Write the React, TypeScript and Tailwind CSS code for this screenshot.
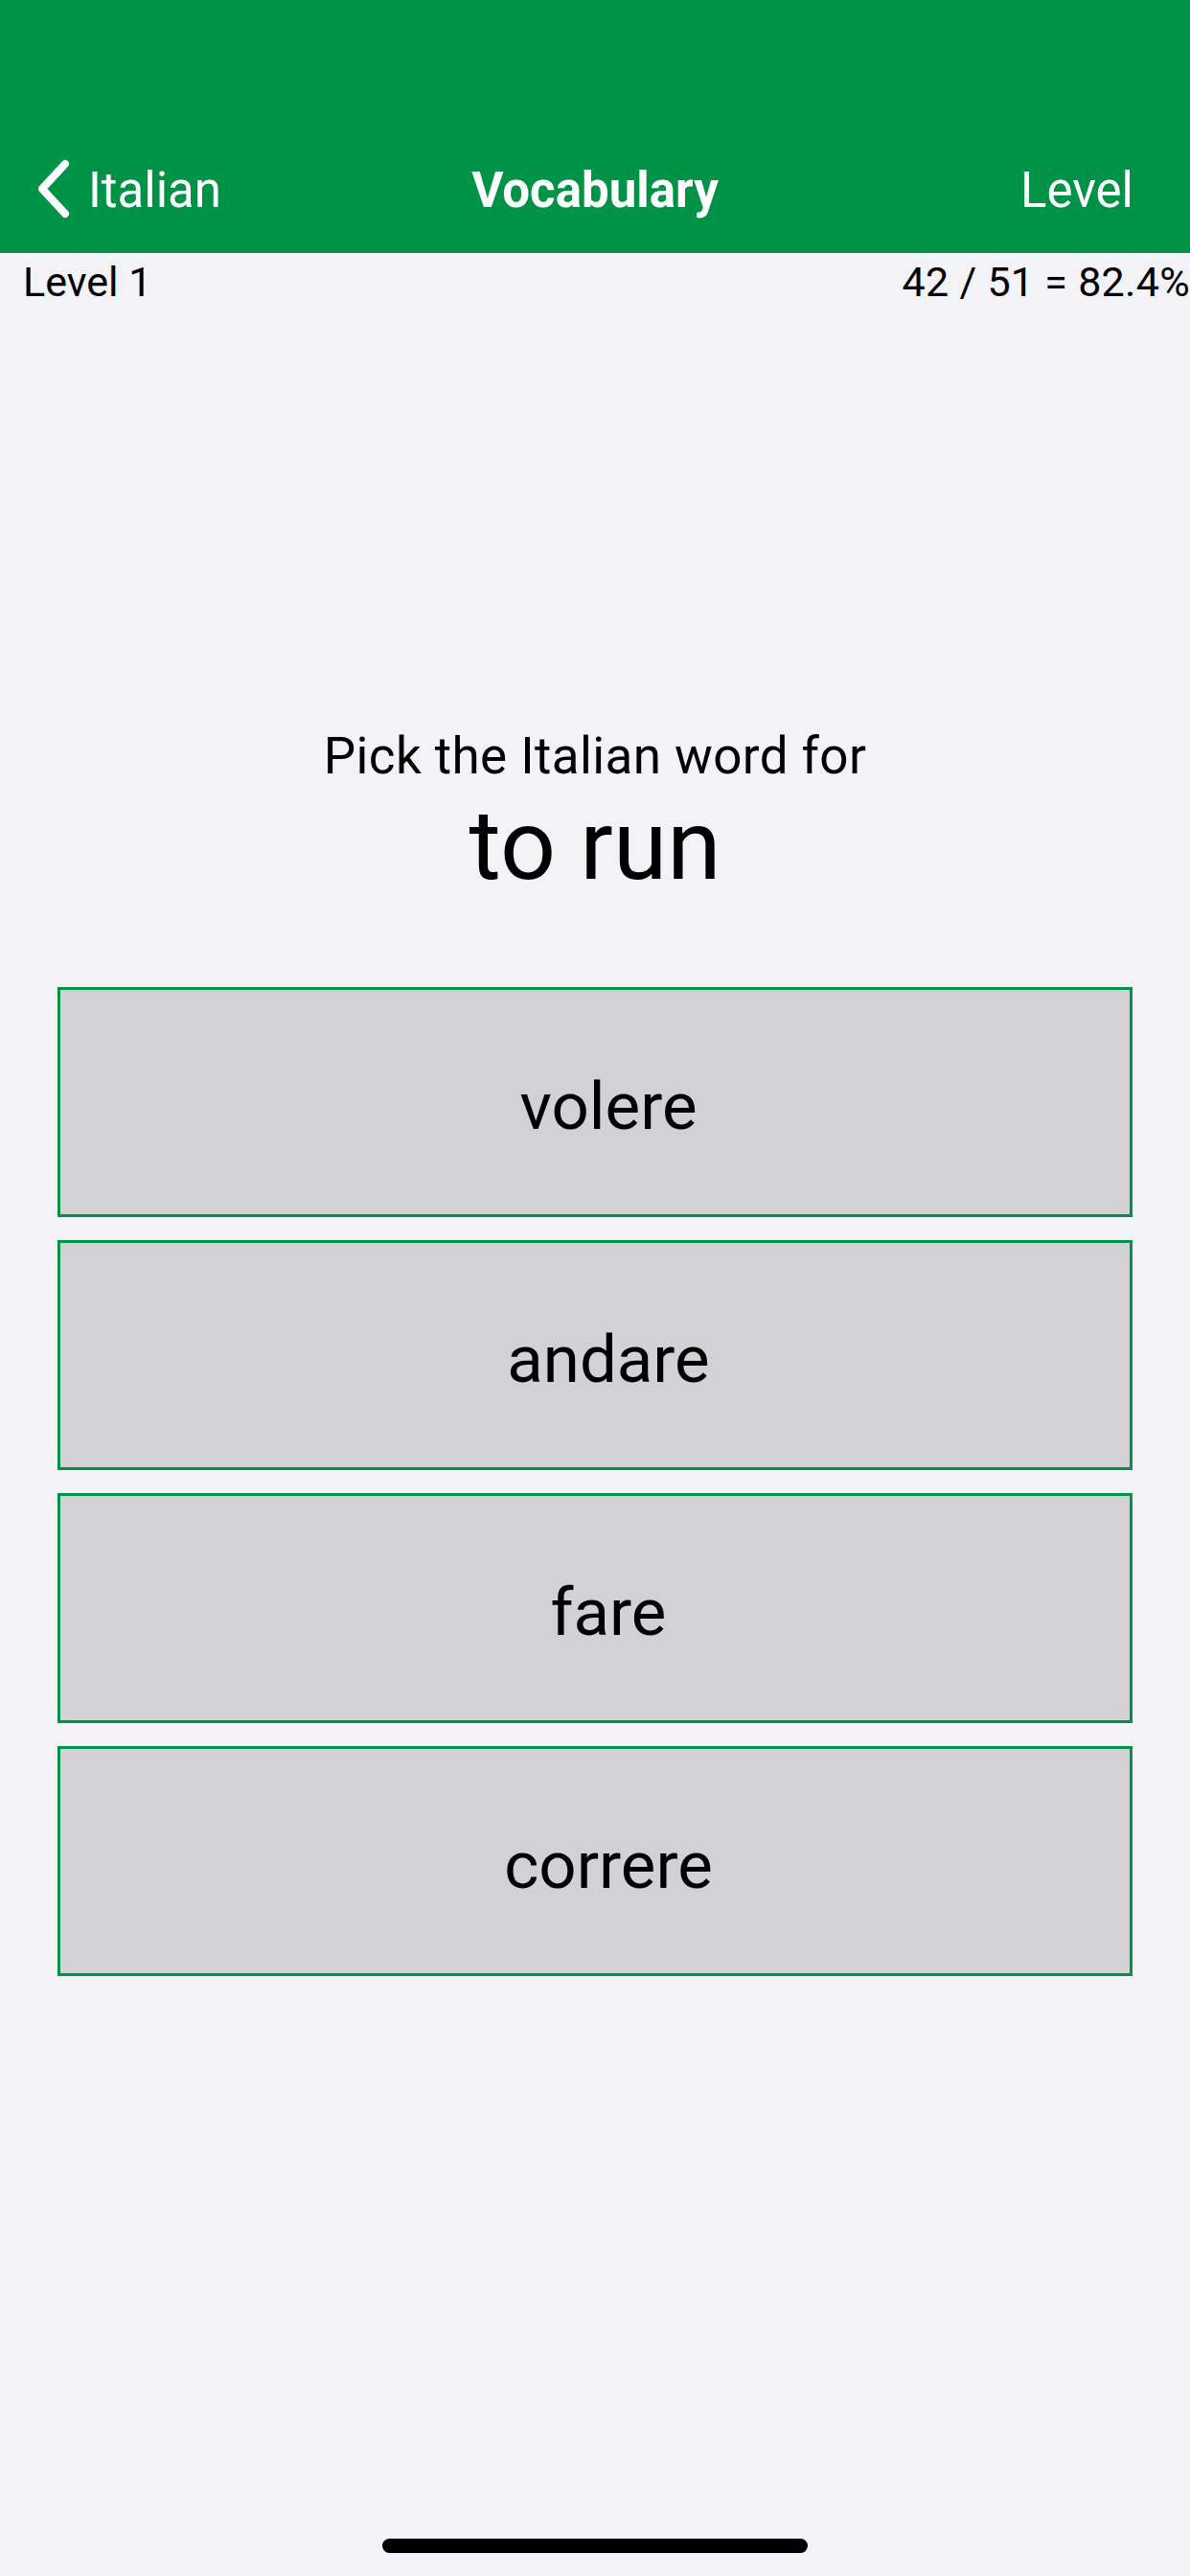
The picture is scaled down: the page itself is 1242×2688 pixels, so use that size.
const options = ['volere', 'andare', 'fare', 'correre'];

export default function App() {
  return (
    <div
      className="min-h-[2688px] w-[1242px] flex flex-col bg-[#f2f2f7] text-black"
      style={{ fontFamily: 'Roboto, "Noto Sans", sans-serif' }}
    >
      {/* nav bar */}
      <div className="bg-[#009348] pt-[132px]">
        <div className="h-[132px] grid grid-cols-3 items-center text-white text-[51px] leading-none">
          <div className="flex items-center pl-[34px]">
            <svg width="44" height="68" viewBox="0 0 44 68" fill="none" className="mr-[14px] -mt-[2px]">
              <path d="M34 8L10 34L34 60" stroke="currentColor" strokeWidth="8" strokeLinecap="round" strokeLinejoin="round" />
            </svg>
            <span>Italian</span>
          </div>
          <div className="text-center font-bold">Vocabulary</div>
          <div className="text-right pr-[59px]">Level</div>
        </div>
      </div>

      {/* progress row */}
      <div className="flex justify-between items-center h-[60px] pl-[24px] text-[43px] leading-none">
        <span>Level 1</span>
        <span className="tracking-[0.3px]">42 / 51 = 82.4%</span>
      </div>

      {/* question */}
      <div className="mt-[434px] flex flex-col items-center">
        <p className="text-[53px] leading-[62px] tracking-[0.4px]">Pick the Italian word for</p>
        <p className="text-[102px] leading-[120px] mt-[2px]">to run</p>
      </div>

      {/* answers */}
      <div className="mt-[88px] px-[60px] flex flex-col gap-[24px]">
        {options.map((word) => (
          <button
            key={word}
            className="h-[240px] w-full bg-[#d1d1d6] border-[3px] border-[#009348] flex items-center justify-center pl-[28px] pt-[8px] text-[69px] leading-none"
          >
            {word}
          </button>
        ))}
      </div>

      <div className="flex-1" />

      {/* home indicator */}
      <div className="flex justify-center pb-[24px]">
        <div className="w-[444px] h-[15px] rounded-full bg-black" />
      </div>
    </div>
  );
}
